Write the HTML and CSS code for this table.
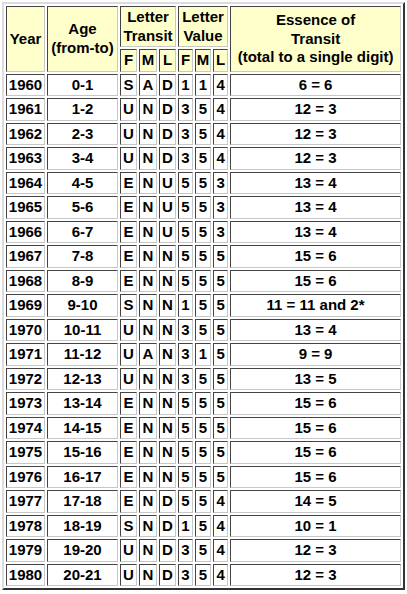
FILE: index.html
```html
<!DOCTYPE html>
<html>
<head>
<meta charset="utf-8">
<link rel="stylesheet" href="styles.css">
</head>
<body>
<table class="transit">
  <colgroup>
    <col class="c-year"><col class="c-age">
    <col class="c-tf"><col class="c-tm"><col class="c-tl">
    <col class="c-vf"><col class="c-vm"><col class="c-vl">
    <col class="c-ess">
  </colgroup>
  <thead>
    <tr class="h1">
      <th rowspan="2">Year</th>
      <th rowspan="2">Age<br>(from-to)</th>
      <th colspan="3">Letter<br>Transit</th>
      <th colspan="3">Letter<br>Value</th>
      <th rowspan="2">Essence of<br>Transit<br>(total to a single digit)</th>
    </tr>
    <tr class="h2">
      <th>F</th><th>M</th><th>L</th>
      <th>F</th><th>M</th><th>L</th>
    </tr>
  </thead>
  <tbody>
    <tr><td>1960</td><td>0-1</td><td>S</td><td>A</td><td>D</td><td>1</td><td>1</td><td>4</td><td>6 = 6</td></tr>
    <tr><td>1961</td><td>1-2</td><td>U</td><td>N</td><td>D</td><td>3</td><td>5</td><td>4</td><td>12 = 3</td></tr>
    <tr><td>1962</td><td>2-3</td><td>U</td><td>N</td><td>D</td><td>3</td><td>5</td><td>4</td><td>12 = 3</td></tr>
    <tr><td>1963</td><td>3-4</td><td>U</td><td>N</td><td>D</td><td>3</td><td>5</td><td>4</td><td>12 = 3</td></tr>
    <tr><td>1964</td><td>4-5</td><td>E</td><td>N</td><td>U</td><td>5</td><td>5</td><td>3</td><td>13 = 4</td></tr>
    <tr><td>1965</td><td>5-6</td><td>E</td><td>N</td><td>U</td><td>5</td><td>5</td><td>3</td><td>13 = 4</td></tr>
    <tr><td>1966</td><td>6-7</td><td>E</td><td>N</td><td>U</td><td>5</td><td>5</td><td>3</td><td>13 = 4</td></tr>
    <tr><td>1967</td><td>7-8</td><td>E</td><td>N</td><td>N</td><td>5</td><td>5</td><td>5</td><td>15 = 6</td></tr>
    <tr><td>1968</td><td>8-9</td><td>E</td><td>N</td><td>N</td><td>5</td><td>5</td><td>5</td><td>15 = 6</td></tr>
    <tr><td>1969</td><td>9-10</td><td>S</td><td>N</td><td>N</td><td>1</td><td>5</td><td>5</td><td>11 = 11 and 2*</td></tr>
    <tr><td>1970</td><td>10-11</td><td>U</td><td>N</td><td>N</td><td>3</td><td>5</td><td>5</td><td>13 = 4</td></tr>
    <tr><td>1971</td><td>11-12</td><td>U</td><td>A</td><td>N</td><td>3</td><td>1</td><td>5</td><td>9 = 9</td></tr>
    <tr><td>1972</td><td>12-13</td><td>U</td><td>N</td><td>N</td><td>3</td><td>5</td><td>5</td><td>13 = 5</td></tr>
    <tr><td>1973</td><td>13-14</td><td>E</td><td>N</td><td>N</td><td>5</td><td>5</td><td>5</td><td>15 = 6</td></tr>
    <tr><td>1974</td><td>14-15</td><td>E</td><td>N</td><td>N</td><td>5</td><td>5</td><td>5</td><td>15 = 6</td></tr>
    <tr><td>1975</td><td>15-16</td><td>E</td><td>N</td><td>N</td><td>5</td><td>5</td><td>5</td><td>15 = 6</td></tr>
    <tr><td>1976</td><td>16-17</td><td>E</td><td>N</td><td>N</td><td>5</td><td>5</td><td>5</td><td>15 = 6</td></tr>
    <tr><td>1977</td><td>17-18</td><td>E</td><td>N</td><td>D</td><td>5</td><td>5</td><td>4</td><td>14 = 5</td></tr>
    <tr><td>1978</td><td>18-19</td><td>S</td><td>N</td><td>D</td><td>1</td><td>5</td><td>4</td><td>10 = 1</td></tr>
    <tr><td>1979</td><td>19-20</td><td>U</td><td>N</td><td>D</td><td>3</td><td>5</td><td>4</td><td>12 = 3</td></tr>
    <tr><td>1980</td><td>20-21</td><td>U</td><td>N</td><td>D</td><td>3</td><td>5</td><td>4</td><td>12 = 3</td></tr>
  </tbody>
</table>
</body>
</html>
```
FILE: styles.css
```css
html, body {
  margin: 0;
  padding: 0;
  background: #ffffff;
}
body {
  padding: 2px 0 0 2px;
  font-family: "Liberation Sans", Arial, sans-serif;
  font-size: 15px;
  font-weight: bold;
  color: #000;
}
.transit {
  table-layout: fixed;
  width: 403px;
  border-collapse: separate;
  border-spacing: 2px;
  border: 2px solid;
  border-color: #dcdcdc #333333 #333333 #dcdcdc;
}
.c-year { width: 39px; }
.c-age { width: 71px; }
.c-tf { width: 17px; }
.c-tm { width: 18px; }
.c-tl { width: 17px; }
.c-vf { width: 15px; }
.c-vm { width: 16px; }
.c-vl { width: 15px; }
.c-ess { width: 171px; }
.transit th,
.transit td {
  box-sizing: border-box;
  padding: 1px 0;
  border: 1px solid;
  border-color: #444444 #c8c8c8 #c8c8c8 #444444;
  text-align: center;
  vertical-align: middle;
  line-height: 18.5px;
  font-weight: bold;
  white-space: nowrap;
  overflow: visible;
}
.transit th {
  background: #ffffcc;
}
.transit td {
  background: #ffffff;
}
.h1 th {
  height: 41px;
}
.h2 th {
  height: 22px;
}
.transit tbody td {
  height: 22.45px;
}
```
